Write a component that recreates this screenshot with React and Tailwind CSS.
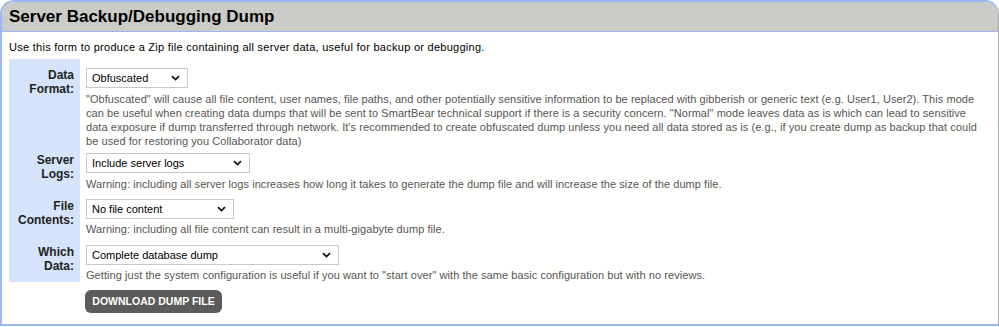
import { useState } from "react";

const FONT = { fontFamily: '"Liberation Sans", Arial, sans-serif' };

function Chevron() {
  return (
    <svg width="9" height="6" viewBox="0 0 9 6" className="block">
      <path d="M1 1.2 L4.5 4.6 L8 1.2" fill="none" stroke="#111" strokeWidth="1.7" />
    </svg>
  );
}

function Select({ value, options, width, onChange }) {
  return (
    <div className="relative" style={{ width }}>
      <select
        value={value}
        onChange={(e) => onChange(e.target.value)}
        className="block appearance-none w-full h-[20px] border border-[#c8c8c8] bg-white pl-[5px] pr-5 text-[11px] leading-[18px] text-black outline-none"
      >
        {options.map((o) => (
          <option key={o}>{o}</option>
        ))}
      </select>
      <div className="pointer-events-none absolute right-[8px] top-[7px]">
        <Chevron />
      </div>
    </div>
  );
}

function Row({ label, children, pt = "pt-[4px]" }) {
  return (
    <>
      <div className={`bg-[#d5e4fb] pr-[6px] text-right text-[12px] font-bold leading-[14px] text-[#222] ${pt}`}>
        {label}
      </div>
      <div className={`pl-[6px] ${pt}`}>{children}</div>
    </>
  );
}

const desc = "max-w-[896px] text-[11px] leading-[14px] tracking-[0.06px] text-[#555]";

export default function App() {
  const [format, setFormat] = useState("Obfuscated");
  const [logs, setLogs] = useState("Include server logs");
  const [content, setContent] = useState("No file content");
  const [which, setWhich] = useState("Complete database dump");

  return (
    <div className="w-[999px] h-[327px] bg-white" style={FONT}>
      <div className="rounded-t-[14px] border-t-2 border-l-2 border-b-2 border-r border-[#9db7f5] border-r-[#a9a9a9] bg-[#fffffd] overflow-hidden">
        <div className="h-[30px] bg-[#cbcbc8] border-b border-[#9db7f5] pl-[7px] flex items-center">
          <h1 className="text-[17px] font-bold text-black">Server Backup/Debugging Dump</h1>
        </div>
        <div className="px-[7px] pt-[8px] pb-[11px]">
          <p className="text-[11px] leading-[14px] tracking-[0.27px] text-black">
            Use this form to produce a Zip file containing all server data, useful for backup or debugging.
          </p>
          <div className="mt-[5px] grid grid-cols-[71px_1fr] pr-[6px]">
            <Row
              label={
                <>
                  Data
                  <br />
                  Format:
                </>
              }
              pt="pt-[9px]"
            >
              <Select
                value={format}
                onChange={setFormat}
                width={102}
                options={["Obfuscated", "Normal"]}
              />
              <p className={`mt-[4px] ${desc}`}>
                "Obfuscated" will cause all file content, user names, file paths, and other potentially sensitive information to be replaced with gibberish or generic text (e.g. User1, User2). This mode can be useful when creating data dumps that will be sent to SmartBear technical support if there is a security concern. "Normal" mode leaves data as is which can lead to sensitive data exposure if dump transferred through network. It's recommended to create obfuscated dump unless you need all data stored as is (e.g., if you create dump as backup that could be used for restoring you Collaborator data)
              </p>
            </Row>
            <Row
              label={
                <>
                  Server
                  <br />
                  Logs:
                </>
              }
              pt="pt-[5px]"
            >
              <Select
                value={logs}
                onChange={setLogs}
                width={164}
                options={["Include server logs", "No server logs"]}
              />
              <p className={`mt-[4px] ${desc}`}>
                Warning: including all server logs increases how long it takes to generate the dump file and will increase the size of the dump file.
              </p>
            </Row>
            <Row
              label={
                <>
                  File
                  <br />
                  Contents:
                </>
              }
              pt="pt-[8px]"
            >
              <Select
                value={content}
                onChange={setContent}
                width={148}
                options={["No file content", "Include all file content"]}
              />
              <p className={`mt-[3px] ${desc}`}>
                Warning: including all file content can result in a multi-gigabyte dump file.
              </p>
            </Row>
            <Row
              label={
                <>
                  Which
                  <br />
                  Data:
                </>
              }
              pt="pt-[9px]"
            >
              <Select
                value={which}
                onChange={setWhich}
                width={253}
                options={["Complete database dump", "System configuration only"]}
              />
              <p className={`mt-[3px] ${desc}`}>
                Getting just the system configuration is useful if you want to "start over" with the same basic configuration but with no reviews.
              </p>
            </Row>
          </div>
          <div className="pl-[76px] pt-[8px]">
            <button className="block h-[23px] w-[137px] rounded-[6px] bg-[#5b5b59] text-[10.5px] font-bold text-white uppercase">
              Download Dump File
            </button>
          </div>
        </div>
      </div>
    </div>
  );
}
